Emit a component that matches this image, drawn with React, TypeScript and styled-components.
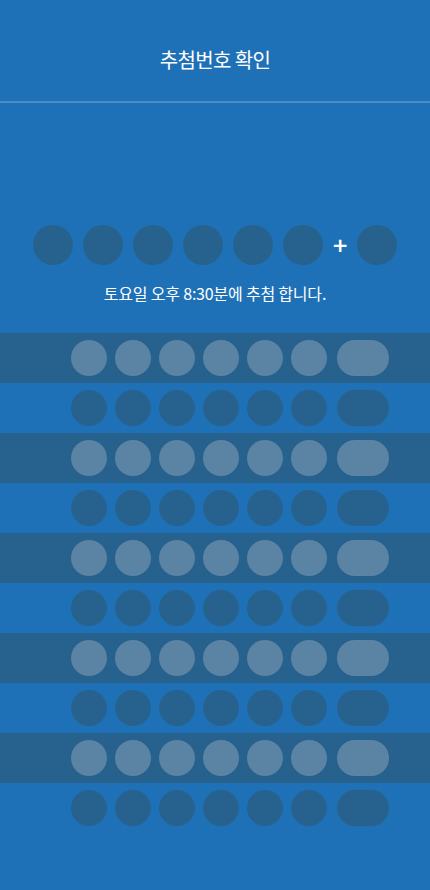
import React from "react";
import styled, { createGlobalStyle } from "styled-components";

const Global = createGlobalStyle`
  html, body { margin: 0; padding: 0; background: #1f71b7; }
  body { font-family: "Noto Sans CJK KR", "Noto Sans", sans-serif; }
  * { box-sizing: border-box; }
`;

const Page = styled.div`
  width: 430px;
  min-height: 890px;
  background: #1f71b7;
  display: flex;
  flex-direction: column;
`;

const Header = styled.header`
  height: 103px;
  display: flex;
  align-items: center;
  justify-content: center;
  border-bottom: 2px solid #4a8cc6;
  padding-top: 18px;
`;

const Title = styled.h1`
  margin: 0;
  font-size: 20px;
  font-weight: 400;
  color: #ffffff;
  letter-spacing: -0.6px;
`;

const DrawSection = styled.section`
  padding-top: 122px;
  display: flex;
  flex-direction: column;
  align-items: center;
`;

const BallRow = styled.div`
  display: flex;
  align-items: center;
  gap: 10px;
`;

const Ball = styled.div`
  width: 40px;
  height: 40px;
  border-radius: 50%;
  background: #27628f;
`;

const Plus = styled.div`
  width: 14px;
  display: flex;
  align-items: center;
  justify-content: center;
  color: #fff;
  font-family: "DejaVu Sans", sans-serif;
  font-weight: 700;
  font-size: 20px;
  line-height: 1;
`;

const Notice = styled.p`
  margin: 17px 0 0;
  color: #fff;
  font-size: 16px;
  letter-spacing: -0.2px;
  line-height: 22px;
`;

const List = styled.div`
  margin-top: 29px;
  display: flex;
  flex-direction: column;
`;

const Row = styled.div<{ $dark: boolean }>`
  height: 50px;
  padding-left: 30px;
  display: flex;
  align-items: center;
  justify-content: center;
  gap: 8px;
  background: ${(p) => (p.$dark ? "#27628f" : "#1f71b7")};
`;

const SmallBall = styled.div<{ $light: boolean }>`
  width: 36px;
  height: 36px;
  border-radius: 50%;
  background: ${(p) => (p.$light ? "#5b83a3" : "#27628f")};
`;

const Pill = styled.div<{ $light: boolean }>`
  width: 52px;
  height: 36px;
  border-radius: 18px;
  margin-left: 2px;
  background: ${(p) => (p.$light ? "#5b83a3" : "#27628f")};
`;

export default function App() {
  const rows = Array.from({ length: 10 }, (_, i) => i);
  return (
    <Page>
      <Global />
      <Header>
        <Title>추첨번호 확인</Title>
      </Header>
      <DrawSection>
        <BallRow>
          {[0, 1, 2, 3, 4, 5].map((i) => (
            <Ball key={i} />
          ))}
          <Plus>+</Plus>
          <Ball />
        </BallRow>
        <Notice>토요일 오후 8:30분에 추첨 합니다.</Notice>
      </DrawSection>
      <List>
        {rows.map((r) => {
          const dark = r % 2 === 0;
          return (
            <Row key={r} $dark={dark}>
              {[0, 1, 2, 3, 4, 5].map((i) => (
                <SmallBall key={i} $light={dark} />
              ))}
              <Pill $light={dark} />
            </Row>
          );
        })}
      </List>
    </Page>
  );
}
